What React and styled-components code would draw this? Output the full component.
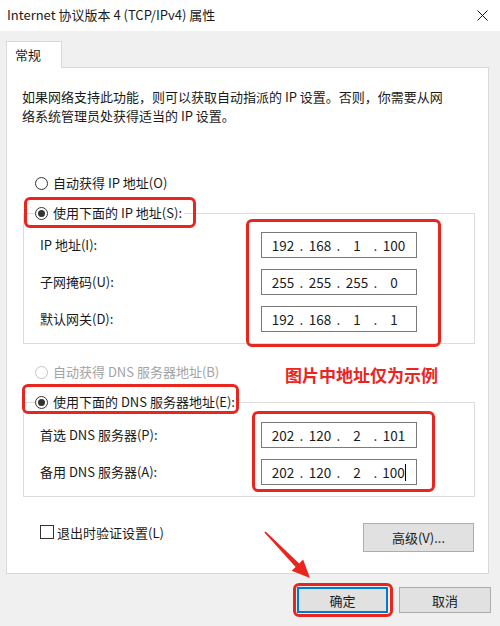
import styled, { createGlobalStyle } from "styled-components";

const GlobalStyle = createGlobalStyle`
  html, body {
    margin: 0;
    padding: 0;
    background: #f0f0f0;
  }
  body {
    font-family: "Noto Sans CJK SC", "Noto Sans", sans-serif;
    font-size: 13px;
    color: #1a1a1a;
  }
`;

const RED = "#e8261f";

const Window = styled.div`
  position: relative;
  width: 500px;
  height: 626px;
  background: #f0f0f0;
  overflow: hidden;
`;

const TitleBar = styled.div`
  height: 31px;
  box-sizing: border-box;
  background: #fff;
  display: flex;
  align-items: center;
  justify-content: space-between;
  padding: 0 12px 1px 7px;
  font-size: 13px;
  line-height: 18px;
`;

const Body = styled.div`
  padding: 10px 0 0 6px;
`;

const Tab = styled.div`
  position: relative;
  z-index: 1;
  width: 56px;
  height: 27px;
  box-sizing: border-box;
  margin-bottom: -1px;
  padding-left: 8px;
  border: 1px solid #d9d9d9;
  border-bottom: none;
  background: #fff;
  line-height: 25px;
`;

const Panel = styled.div`
  width: 483px;
  height: 507px;
  box-sizing: border-box;
  border: 1px solid #d9d9d9;
  background: #fff;
  padding: 19px 14px 0 16px;
`;

const Intro = styled.p`
  margin: 0 0 0 -1px;
  line-height: 19px;
  white-space: nowrap;
`;

const Marked = styled.span`
  position: relative;
  &::after {
    content: "";
    position: absolute;
    inset: ${(p) => p.$inset};
    border: 3px solid ${RED};
    border-radius: 6px;
    pointer-events: none;
  }
`;

const RadioRow = styled.label`
  display: flex;
  align-items: center;
  height: 18px;
  line-height: 18px;
  padding-left: ${(p) => (p.$inLegend ? "0" : "12px")};
  margin-top: ${(p) => p.$top || "0"};
  color: ${(p) => (p.$disabled ? "#a3a3a3" : "#1a1a1a")};
  white-space: nowrap;
`;

const Circle = styled.span`
  width: 13px;
  height: 13px;
  box-sizing: border-box;
  border-radius: 50%;
  border: 1px solid ${(p) => (p.$disabled ? "#c4c4c4" : "#333")};
  background: #fff;
  margin-right: 5px;
  display: flex;
  align-items: center;
  justify-content: center;
  &::after {
    content: "";
    width: 7px;
    height: 7px;
    border-radius: 50%;
    background: ${(p) => (p.$checked ? "#333" : "transparent")};
  }
`;

const Group = styled.fieldset`
  margin: ${(p) => p.$top} 0 0 0;
  width: 452px;
  box-sizing: border-box;
  border: 1px solid #dcdcdc;
  padding: ${(p) => p.$padTop} 0 11px 0;
  min-inline-size: 0;
`;

const Legend = styled.legend`
  margin-left: 11px;
  padding: 0 2px 0 0;
`;

const Fields = styled.div`
  display: grid;
  grid-template-columns: 221px 156px;
  padding-left: 16px;
`;

const LabelCol = styled.div`
  display: flex;
  flex-direction: column;
  gap: 11px;
`;

const FieldLabel = styled.div`
  height: 26px;
  line-height: 26px;
  white-space: nowrap;
`;

const InputCol = styled(Marked)`
  display: flex;
  flex-direction: column;
  gap: 11px;
`;

const IpBox = styled.div`
  width: 156px;
  height: 26px;
  box-sizing: border-box;
  border: 1px solid #7a7a7a;
  background: #fff;
  display: flex;
  align-items: center;
  padding-left: 6px;
  font-size: 13.5px;
  color: #1a1a1a;
`;

const Segment = styled.span`
  width: 30px;
  text-align: center;
  display: flex;
  justify-content: center;
  align-items: center;
`;

const Dot = styled.span`
  width: 7px;
  text-align: center;
`;

const Caret = styled.span`
  display: inline-block;
  width: 1px;
  height: 17px;
  background: #000;
`;

const NoteRow = styled.div`
  display: flex;
  align-items: center;
  justify-content: space-between;
  margin-top: 13px;
  width: 452px;
`;

const Note = styled.span`
  margin-right: 37px;
  padding-top: 6px;
  color: ${RED};
  font-weight: bold;
  font-size: 17px;
  line-height: 24px;
`;

const BottomRow = styled.div`
  display: flex;
  align-items: flex-start;
  justify-content: space-between;
  width: 452px;
  margin-top: 26px;
`;

const CheckLabel = styled.label`
  display: flex;
  align-items: center;
  height: 18px;
  padding-left: 17px;
  white-space: nowrap;
`;

const Box = styled.span`
  width: 14px;
  height: 14px;
  box-sizing: border-box;
  border: 1px solid #333;
  background: #fff;
  margin-right: 3px;
`;

const Button = styled.button`
  font-family: inherit;
  font-size: 13px;
  color: #1a1a1a;
  width: ${(p) => p.$w}px;
  height: ${(p) => p.$h}px;
  margin: 0 ${(p) => p.$right || 0}px 0 0;
  padding: 0;
  background: #e1e1e1;
  border: 1px solid ${(p) => (p.$primary ? "#0078d7" : "#adadad")};
  box-shadow: ${(p) => (p.$primary ? "inset 0 0 0 1px #0078d7" : "none")};
`;

const Footer = styled.div`
  display: flex;
  justify-content: flex-end;
  gap: 11px;
  margin-top: 13px;
  padding-right: 9px;
`;

const Overlay = styled.svg`
  position: absolute;
  left: 0;
  top: 0;
  pointer-events: none;
`;

function Radio({ children, checked, disabled, inLegend, top }) {
  return (
    <RadioRow $disabled={disabled} $inLegend={inLegend} $top={top}>
      <Circle $checked={checked} $disabled={disabled} />
      {children}
    </RadioRow>
  );
}

function IpField({ parts, caret }) {
  return (
    <IpBox>
      {parts.map((v, i) => (
        <span key={i} style={{ display: "contents" }}>
          {i > 0 && <Dot>.</Dot>}
          <Segment>
            {v}
            {caret && i === parts.length - 1 && <Caret />}
          </Segment>
        </span>
      ))}
    </IpBox>
  );
}

const ipRows = [
  { label: "IP 地址(I):", parts: ["192", "168", "1", "100"] },
  { label: "子网掩码(U):", parts: ["255", "255", "255", "0"] },
  { label: "默认网关(D):", parts: ["192", "168", "1", "1"] },
];

const dnsRows = [
  { label: "首选 DNS 服务器(P):", parts: ["202", "120", "2", "101"] },
  { label: "备用 DNS 服务器(A):", parts: ["202", "120", "2", "100"], caret: true },
];

function FieldGrid({ rows, inset }) {
  return (
    <Fields>
      <LabelCol>
        {rows.map((r) => (
          <FieldLabel key={r.label}>{r.label}</FieldLabel>
        ))}
      </LabelCol>
      <InputCol $inset={inset}>
        {rows.map((r) => (
          <IpField key={r.label} parts={r.parts} caret={r.caret} />
        ))}
      </InputCol>
    </Fields>
  );
}

export default function App() {
  return (
    <Window>
      <GlobalStyle />
      <TitleBar>
        <span>Internet 协议版本 4 (TCP/IPv4) 属性</span>
        <svg width="11" height="11" viewBox="0 0 11 11">
          <path d="M0.5 0.5 L10.5 10.5 M10.5 0.5 L0.5 10.5" stroke="#111" strokeWidth="1" />
        </svg>
      </TitleBar>
      <Body>
        <Tab>常规</Tab>
        <Panel>
          <Intro>
            如果网络支持此功能，则可以获取自动指派的 IP 设置。否则，你需要从网
            <br />
            络系统管理员处获得适当的 IP 设置。
          </Intro>

          <Radio top="49px">自动获得 IP 地址(O)</Radio>
          <Group $top="12px" $padTop="10px">
            <Legend>
              <Marked $inset="-7px -14px -6px -11px">
                <Radio checked inLegend>使用下面的 IP 地址(S):</Radio>
              </Marked>
            </Legend>
            <FieldGrid rows={ipRows} inset="-13px -24px -15px -15px" />
          </Group>

          <NoteRow>
            <Radio disabled>自动获得 DNS 服务器地址(B)</Radio>
            <Note>图片中地址仅为示例</Note>
          </NoteRow>
          <Group $top="6px" $padTop="11px">
            <Legend>
              <Marked $inset="-9px -4px -3px -13px">
                <Radio checked inLegend>使用下面的 DNS 服务器地址(E):</Radio>
              </Marked>
            </Legend>
            <FieldGrid rows={dnsRows} inset="-11px -18px -7px -9px" />
          </Group>

          <BottomRow>
            <CheckLabel>
              <Box />
              退出时验证设置(L)
            </CheckLabel>
            <Button $w={111} $h={29} $right={1}>高级(V)...</Button>
          </BottomRow>
        </Panel>
        <Footer>
          <Marked $inset="-4px -5px -4px -4px">
            <Button $w={91} $h={26} $primary>确定</Button>
          </Marked>
          <Button $w={92} $h={26}>取消</Button>
        </Footer>
      </Body>
      <Overlay width="500" height="626" viewBox="0 0 500 626">
        <polygon
          points="265.6,531.4 299.2,563.4 303.1,559.5 310,578 291.7,570.7 295.6,566.9 264.4,532.6"
          fill={RED}
        />
      </Overlay>
    </Window>
  );
}
